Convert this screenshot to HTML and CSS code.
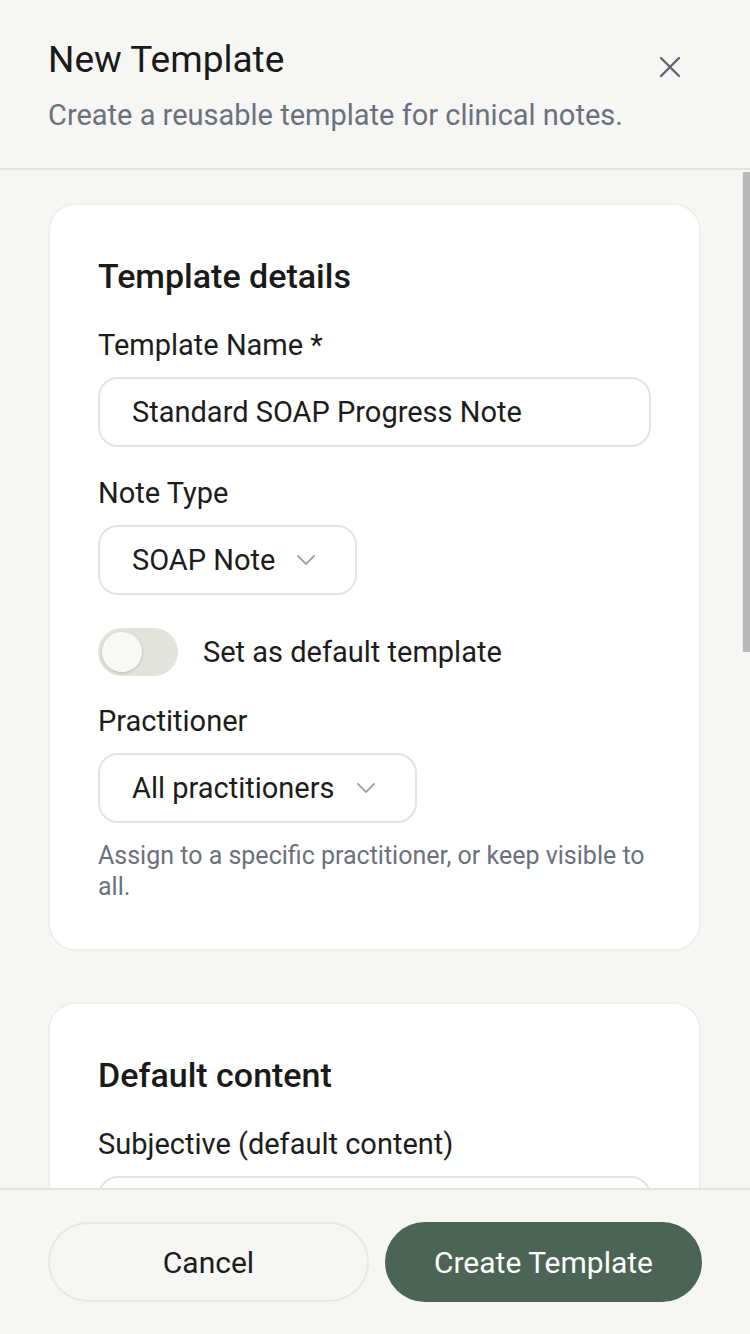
FILE: index.html
```html
<!DOCTYPE html>
<html lang="en">
<head>
<meta charset="utf-8">
<title>New Template</title>
<link rel="stylesheet" href="styles.css">
</head>
<body>
<div class="app">
  <header class="header">
    <div class="header-text">
      <h1 class="title">New Template</h1>
      <p class="subtitle">Create a reusable template for clinical notes.</p>
    </div>
    <button class="close" aria-label="Close">
      <svg width="22" height="22" viewBox="0 0 22 22" fill="none" stroke="#5f6570" stroke-width="2.4" stroke-linecap="round"><path d="M2 2L20 20M20 2L2 20"/></svg>
    </button>
  </header>

  <div class="scroll-wrap">
    <main class="scroll">
      <section class="card">
        <h2 class="card-title">Template details</h2>

        <div class="field first">
          <label class="label">Template Name *</label>
          <div class="input">Standard SOAP Progress Note</div>
        </div>

        <div class="field">
          <label class="label">Note Type</label>
          <div class="select">
            <span>SOAP Note</span>
            <svg class="chev" width="20" height="12" viewBox="0 0 20 12" fill="none" stroke="#a3a3a3" stroke-width="1.8" stroke-linecap="round" stroke-linejoin="round"><path d="M2 2L10 10L18 2"/></svg>
          </div>
        </div>

        <div class="toggle-row">
          <div class="toggle"><span class="knob"></span></div>
          <span class="toggle-label">Set as default template</span>
        </div>

        <div class="field practitioner">
          <label class="label">Practitioner</label>
          <div class="select">
            <span>All practitioners</span>
            <svg class="chev" width="20" height="12" viewBox="0 0 20 12" fill="none" stroke="#a3a3a3" stroke-width="1.8" stroke-linecap="round" stroke-linejoin="round"><path d="M2 2L10 10L18 2"/></svg>
          </div>
          <p class="help">Assign to a specific practitioner, or keep visible to all.</p>
        </div>
      </section>

      <section class="card">
        <h2 class="card-title">Default content</h2>
        <div class="field first">
          <label class="label">Subjective (default content)</label>
          <div class="textarea"></div>
        </div>
      </section>
    </main>
    <div class="scroll-thumb"></div>
  </div>

  <footer class="footer">
    <button class="btn btn-cancel">Cancel</button>
    <button class="btn btn-primary">Create Template</button>
  </footer>
</div>
</body>
</html>
```

FILE: styles.css
```css
* { box-sizing: border-box; }

html, body {
  margin: 0;
  padding: 0;
  height: 100%;
}

body {
  background: #f6f6f4;
  font-family: "Roboto", "Liberation Sans", sans-serif;
  color: #1c1c1c;
}

.app {
  display: flex;
  flex-direction: column;
  height: 100vh;
}

.header {
  flex: 0 0 170px;
  display: flex;
  justify-content: space-between;
  align-items: flex-start;
  padding: 39px 48px 0 48px;
  border-bottom: 2px solid #e3e3e0;
}

.title {
  margin: 0;
  font-size: 37px;
  line-height: 42px;
  font-weight: 400;
  color: #1a1a1a;
}

.subtitle {
  margin: 16px 0 0 0;
  font-size: 29px;
  line-height: 36px;
  color: #6b717c;
}

.close {
  margin: 6px 10px 0 0;
  width: 44px;
  height: 44px;
  padding: 0;
  border: 0;
  background: transparent;
  display: flex;
  align-items: center;
  justify-content: center;
}

.scroll-wrap {
  flex: 1 1 auto;
  position: relative;
  min-height: 0;
  display: flex;
}

.scroll {
  flex: 1 1 auto;
  overflow-y: scroll;
  scrollbar-width: none;
  padding: 33px 49px 48px 48px;
}
.scroll::-webkit-scrollbar { display: none; }

.scroll-thumb {
  position: absolute;
  top: 2px;
  right: 0;
  width: 8px;
  height: 480px;
  background: #b9b9b9;
  border-left: 1px solid #ececea;
}

.card {
  background: #ffffff;
  border: 2px solid #efefec;
  border-radius: 28px;
  padding: 52px 48px 47px 48px;
  margin-bottom: 51px;
}

.card-title {
  margin: 0;
  font-size: 34px;
  line-height: 38px;
  font-weight: 500;
  color: #1a1a1a;
}

.field {
  margin-top: 29px;
}
.field.first {
  margin-top: 33px;
}
.field.practitioner {
  margin-top: 28px;
}

.label {
  display: block;
  font-size: 29px;
  line-height: 34px;
  font-weight: 400;
  color: #1c1c1c;
  margin-bottom: 15px;
}

.input {
  height: 70px;
  border: 2px solid #e3e3e0;
  border-radius: 20px;
  padding: 0 32px;
  display: flex;
  align-items: center;
  font-size: 29px;
  color: #1c1c1c;
}

.select {
  display: inline-flex;
  align-items: center;
  gap: 21px;
  height: 70px;
  border: 2px solid #e3e3e0;
  border-radius: 20px;
  padding: 0 39px 0 32px;
  font-size: 29px;
  color: #1c1c1c;
}

.chev { display: block; }

.toggle-row {
  display: flex;
  align-items: center;
  gap: 25px;
  margin-top: 33px;
}

.toggle {
  width: 80px;
  height: 48px;
  border-radius: 24px;
  background: #e3e3de;
  padding: 4px;
  display: flex;
  align-items: center;
}

.knob {
  width: 40px;
  height: 40px;
  border-radius: 50%;
  background: #f8f8f6;
  box-shadow: 0 1px 3px rgba(0,0,0,0.18);
}

.toggle-label {
  font-size: 29px;
  line-height: 34px;
  font-weight: 400;
  color: #1c1c1c;
}

.help {
  margin: 17px 0 0 0;
  font-size: 25px;
  line-height: 31px;
  color: #6b717c;
}

.textarea {
  height: 200px;
  border: 2px solid #e3e3e0;
  border-radius: 20px;
}

.footer {
  flex: 0 0 146px;
  display: flex;
  gap: 16px;
  padding: 32px 48px 0 48px;
  border-top: 2px solid #e3e3e0;
  background: #f6f6f4;
}

.btn {
  flex: 1 1 0;
  height: 80px;
  border-radius: 40px;
  font-family: inherit;
  font-size: 30px;
  font-weight: 400;
}

.btn-cancel {
  background: #f6f6f4;
  border: 2px solid #e8e8e5;
  color: #1c1c1c;
}

.btn-primary {
  background: #4b6455;
  border: 0;
  color: #ffffff;
}
```
